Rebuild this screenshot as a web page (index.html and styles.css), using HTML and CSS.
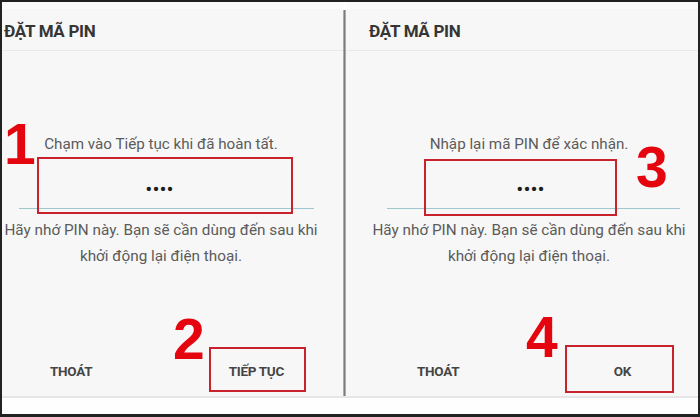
FILE: index.html
```html
<!DOCTYPE html>
<html lang="vi">
<head>
<meta charset="utf-8">
<title>Đặt mã PIN</title>
<link rel="stylesheet" href="styles.css">
</head>
<body>
<div class="frame">
  <div class="row">
    <section class="panel panel-left">
      <header class="head">ĐẶT MÃ PIN</header>
      <div class="content">
        <p class="prompt">Chạm vào Tiếp tục khi đã hoàn tất.</p>
        <div class="field"><span class="dots">••••</span></div>
        <p class="hint">Hãy nhớ PIN này. Bạn sẽ cần dùng đến sau khi<br>khởi động lại điện thoại.</p>
      </div>
      <footer class="foot">
        <span class="btn">THOÁT</span>
        <span class="btn">TIẾP TỤC</span>
      </footer>
      <span class="num n1">1</span>
      <span class="mark m1"></span>
      <span class="num n2">2</span>
      <span class="mark m2"></span>
    </section>
    <div class="divider"></div>
    <section class="panel panel-right">
      <header class="head">ĐẶT MÃ PIN</header>
      <div class="content">
        <p class="prompt">Nhập lại mã PIN để xác nhận.</p>
        <div class="field"><span class="dots">••••</span></div>
        <p class="hint">Hãy nhớ PIN này. Bạn sẽ cần dùng đến sau khi<br>khởi động lại điện thoại.</p>
      </div>
      <footer class="foot">
        <span class="btn">THOÁT</span>
        <span class="btn">OK</span>
      </footer>
      <span class="num n3">3</span>
      <span class="mark m3"></span>
      <span class="num n4">4</span>
      <span class="mark m4"></span>
    </section>
  </div>
  <div class="strip"></div>
</div>
</body>
</html>
```
FILE: styles.css
```css
* { box-sizing: border-box; }
html, body { margin: 0; padding: 0; background: #222; }
.frame {
  width: 700px;
  height: 417px;
  border: 2px solid #222;
  border-bottom-width: 3px;
  background: #fdfdfd;
  display: flex;
  flex-direction: column;
  font-family: Roboto, "Noto Sans", sans-serif;
  overflow: hidden;
}
.row {
  display: flex;
  height: 396px;
  border-bottom: 2px solid #e6e6e6;
}
.panel {
  position: relative;
  display: flex;
  flex-direction: column;
  background: #f7f7f7;
}
.panel-left { width: 341px; }
.panel-right { flex: 1; }
.divider {
  width: 3px;
  margin-top: 8px;
  background: linear-gradient(90deg, #c4c4c4, #7c7c7c 50%, #c4c4c4);
}
.head {
  height: 49px;
  border-top: 7px solid #fbfbfb;
  border-bottom: 1px solid #e9e9e9;
  font-weight: 700;
  font-size: 17px;
  color: #353535;
  letter-spacing: -0.3px;
  display: flex;
  align-items: center;
  padding-top: 2px;
}
.panel-left .head { padding-left: 2px; }
.panel-right .head { padding-left: 23px; }
.content {
  flex: 1;
  width: 314px;
  padding-top: 83px;
  text-align: center;
  color: #5b5b5b;
}
.panel-left .content { margin-left: 2px; }
.panel-right .content { margin-left: 26px; }
.prompt {
  margin: 0;
  font-size: 15.2px;
  line-height: 20px;
}
.field {
  height: 55px;
  margin: 0 4px 0 15px;
  border-bottom: 1.5px solid #9ec8d0;
  display: flex;
  align-items: flex-end;
  justify-content: center;
  padding-bottom: 9px;
}
.panel-right .field { margin: 0 6px 0 15px; }
.dots {
  font-size: 21px;
  line-height: 20px;
  color: #1e1e1e;
  letter-spacing: 0;
}
.panel-left .dots { margin-left: -14px; }
.panel-right .dots { margin-left: -6px; }
.hint {
  margin: 8px 0 0;
  font-size: 15.3px;
  line-height: 26px;
}
.foot {
  height: 48px;
  display: flex;
  justify-content: space-between;
  align-items: center;
  padding-bottom: 2px;
  font-weight: 700;
  font-size: 13.5px;
  color: #454545;
  letter-spacing: -0.3px;
}
.panel-left .foot { padding-left: 48px; padding-right: 59px; }
.panel-right .foot { padding-left: 71px; padding-right: 67px; }
.num {
  position: absolute;
  font-family: "Liberation Sans", Arial, sans-serif;
  font-weight: 700;
  font-size: 57px;
  line-height: 57px;
  color: #e4050f;
}
.n1 { left: 2px; top: 114px; }
.n2 { left: 171px; top: 309px; }
.n3 { left: 290px; top: 137px; }
.n4 { left: 180px; top: 307px; }
.mark {
  position: absolute;
  border: 2.5px solid #c8232d;
}
.m1 { left: 35px; top: 155px; width: 256px; height: 57px; }
.m2 { left: 207px; top: 345px; width: 97px; height: 45px; }
.m3 { left: 78px; top: 157px; width: 193px; height: 57px; }
.m4 { left: 219px; top: 343px; width: 109px; height: 48px; }
.strip { flex: 1; background: #fefefe; }
```
